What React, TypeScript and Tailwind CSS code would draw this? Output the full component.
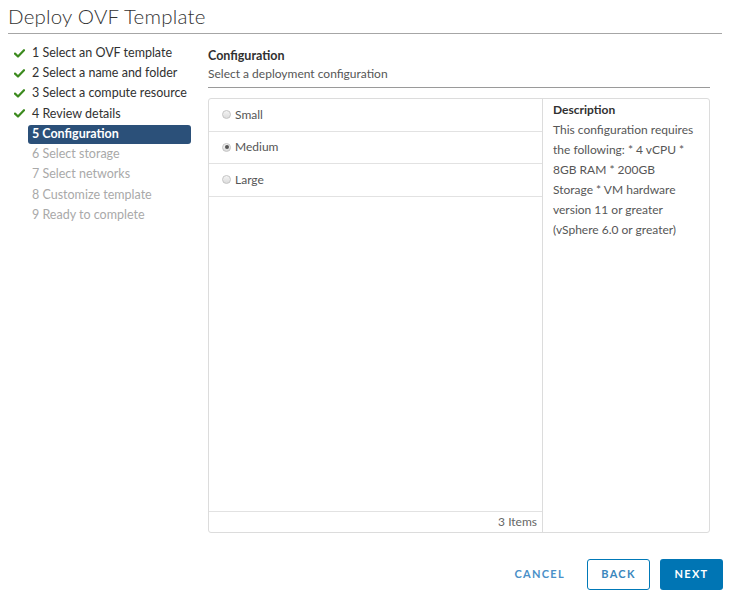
import React from 'react';

const steps = [
  { label: '1 Select an OVF template', state: 'done' },
  { label: '2 Select a name and folder', state: 'done' },
  { label: '3 Select a compute resource', state: 'done' },
  { label: '4 Review details', state: 'done' },
  { label: '5 Configuration', state: 'active' },
  { label: '6 Select storage', state: 'todo' },
  { label: '7 Select networks', state: 'todo' },
  { label: '8 Customize template', state: 'todo' },
  { label: '9 Ready to complete', state: 'todo' },
];

const options = ['Small', 'Medium', 'Large'];

const descLines = [
  'This configuration requires',
  'the following: * 4 vCPU *',
  '8GB RAM * 200GB',
  'Storage * VM hardware',
  'version 11 or greater',
  '(vSphere 6.0 or greater)',
];

const Check = () => (
  <svg width="11" height="9" viewBox="0 0 11 9" className="shrink-0">
    <path d="M1 4.6 L4 7.5 L10 1.2" fill="none" stroke="#3c8a1e" strokeWidth="2.2" strokeLinecap="round" strokeLinejoin="round" />
  </svg>
);

const Radio = ({ checked }: { checked: boolean }) => (
  <span className="w-[9px] h-[9px] rounded-full border border-[#c4c4c4] bg-gradient-to-b from-[#f4f4f4] to-[#dcdcdc] flex items-center justify-center shrink-0">
    {checked && <span className="w-[4px] h-[4px] rounded-full bg-[#555]" />}
  </span>
);

export default function App() {
  return (
    <div className="w-[730px] h-[595px] overflow-hidden bg-white font-['Lato','Liberation_Sans',sans-serif] text-[#333] flex flex-col">
      <div className="mx-2 h-[34px] shrink-0 border-b border-[#a6a6a6] flex items-end pb-[7px]">
        <h1 className="text-[20.5px] font-light leading-none text-[#333] tracking-[0.2px]">Deploy OVF Template</h1>
      </div>

      <div className="flex shrink-0">
        {/* wizard steps */}
        <div className="w-[208px] shrink-0 pt-[9px] pl-[14px]">
          {steps.map((s) => (
            <div key={s.label} className="h-[20.25px] flex items-center">
              <div className="w-[14px] flex items-center">{s.state === 'done' && <Check />}</div>
              <div
                className={`h-[19px] flex items-center rounded-[3px] text-[12.5px] pl-[4px] ${
                  s.state === 'active'
                    ? 'bg-[#2b5079] text-white font-bold w-[163px]'
                    : s.state === 'done'
                    ? 'text-[#313131]'
                    : 'text-[#a9a9a9]'
                }`}
              >
                {s.label}
              </div>
            </div>
          ))}
        </div>

        {/* content */}
        <div className="w-[502px] flex flex-col">
          <div className="pt-[14px] text-[12.5px] font-bold text-[#313131] leading-4">Configuration</div>
          <div className="mt-[2px] text-[12px] text-[#565656] leading-4 pb-[5px] border-b border-[#9a9a9a]">
            Select a deployment configuration
          </div>

          <div className="mt-[10px] h-[435px] border border-[#dcdcdc] rounded-[3px] flex">
            <div className="w-[334px] border-r border-[#dcdcdc] flex flex-col">
              {options.map((o) => (
                <div key={o} className="h-[32.5px] border-b border-[#e2e2e2] flex items-center gap-[4px] pl-[13px] text-[12px] text-[#555]">
                  <Radio checked={o === 'Medium'} />
                  <span>{o}</span>
                </div>
              ))}
              <div className="flex-1" />
              <div className="h-[21px] border-t border-[#e2e2e2] flex items-center justify-end pr-[5px] text-[12px] text-[#666]">
                3 Items
              </div>
            </div>
            <div className="flex-1 px-[10px] pt-[1px]">
              <div className="text-[12px] font-bold text-[#313131] leading-5">Description</div>
              <p className="text-[12px] text-[#565656] leading-5">
                {descLines.map((l, i) => (
                  <React.Fragment key={i}>
                    {l}
                    {i < descLines.length - 1 && <br />}
                  </React.Fragment>
                ))}
              </p>
            </div>
          </div>
        </div>
      </div>

      <div className="flex justify-end pr-[7px] pt-[26px] gap-[10px]">
        <button className="h-[31px] px-[12px] text-[11px] font-bold tracking-[1.3px] text-[#4a90c8]">CANCEL</button>
        <button className="h-[31px] w-[63px] border border-[#0079b8] rounded-[3px] text-[11px] font-bold tracking-[1.3px] text-[#3a87bd] bg-white">BACK</button>
        <button className="h-[31px] w-[63px] rounded-[3px] text-[11px] font-bold tracking-[1.3px] text-white bg-[#0075b4]">NEXT</button>
      </div>
    </div>
  );
}
